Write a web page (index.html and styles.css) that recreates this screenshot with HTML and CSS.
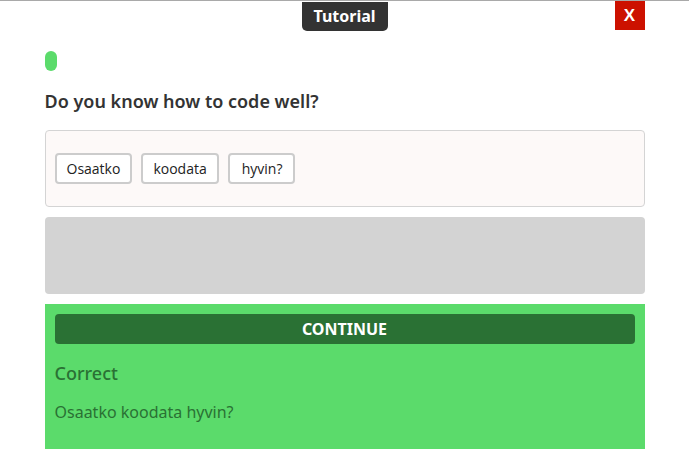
FILE: index.html
```html
<!DOCTYPE html>
<html>
<head>
<meta charset="utf-8">
<link rel="stylesheet" href="styles.css">
</head>
<body>
<div class="topline"></div>
<div class="page">
  <header class="header">
    <div class="badge">Tutorial</div>
    <button class="close">X</button>
  </header>
  <div class="progress"></div>
  <h1 class="question">Do you know how to code well?</h1>
  <div class="answer-box">
    <span class="tile">Osaatko</span>
    <span class="tile">koodata</span>
    <span class="tile">hyvin?</span>
  </div>
  <div class="bank"></div>
  <div class="result">
    <button class="continue">CONTINUE</button>
    <div class="result-title">Correct</div>
    <div class="result-text">Osaatko koodata hyvin?</div>
  </div>
</div>
</body>
</html>
```
FILE: styles.css
```css
html, body {
  margin: 0;
  padding: 0;
  background: #fff;
  font-family: "Noto Sans", "Open Sans", sans-serif;
  overflow: hidden;
}
.topline {
  height: 1px;
  background: #a9a9a9;
}
.page {
  width: 600px;
  margin: 0 auto;
}
.header {
  position: relative;
  height: 29px;
  display: flex;
  justify-content: center;
}
.badge {
  background: #333;
  color: #fff;
  font-weight: 700;
  font-size: 16px;
  height: 29px;
  line-height: 29px;
  padding: 0 10px;
  border-radius: 0 0 5px 5px;
  margin-top: 1px;
  width: 66px;
  text-align: center;
}
.close {
  position: absolute;
  right: 0;
  top: 0;
  width: 30px;
  height: 29px;
  border: none;
  background: #cc1100;
  color: #fff;
  font-family: "Liberation Sans", sans-serif;
  font-weight: 700;
  font-size: 17px;
  line-height: 29px;
  padding: 0;
  cursor: pointer;
}
.progress {
  width: 12px;
  height: 20px;
  background: #5bdb6b;
  border-radius: 6px;
  margin-top: 21px;
}
.question {
  font-size: 18px;
  font-weight: 600;
  color: #333;
  margin: 19px 0 0 0;
  line-height: 22px;
}
.answer-box {
  margin-top: 18px;
  height: 75px;
  border: 1px solid #d4d4d4;
  border-radius: 4px;
  background: #fdf9f8;
  display: flex;
  align-items: center;
  gap: 9px;
  padding: 0 9px;
}
.tile {
  border: 2px solid #ccc;
  border-radius: 4px;
  background: #fff;
  height: 27px;
  line-height: 27px;
  padding: 0 10px;
  font-size: 14px;
  color: #222;
  font-family: "Open Sans", "Noto Sans", sans-serif;
}
.tile:last-child {
  padding: 0 11px 0 12px;
}
.bank {
  margin-top: 10px;
  height: 77px;
  background: #d3d3d3;
  border-radius: 4px;
}
.result {
  margin-top: 10px;
  background: #5bdb6b;
  padding: 10px 10px 26px 10px;
}
.continue {
  display: block;
  width: 100%;
  height: 30px;
  border: none;
  border-radius: 4px;
  background: #2a7134;
  color: #fff;
  font-family: "Noto Sans", sans-serif;
  font-weight: 700;
  font-size: 16px;
  padding: 0;
}
.result-title {
  margin-top: 17px;
  font-size: 18px;
  font-weight: 500;
  color: #2a7134;
  line-height: 24px;
}
.result-text {
  margin-top: 16px;
  font-size: 16px;
  color: #2a7134;
  line-height: 22px;
}
```
